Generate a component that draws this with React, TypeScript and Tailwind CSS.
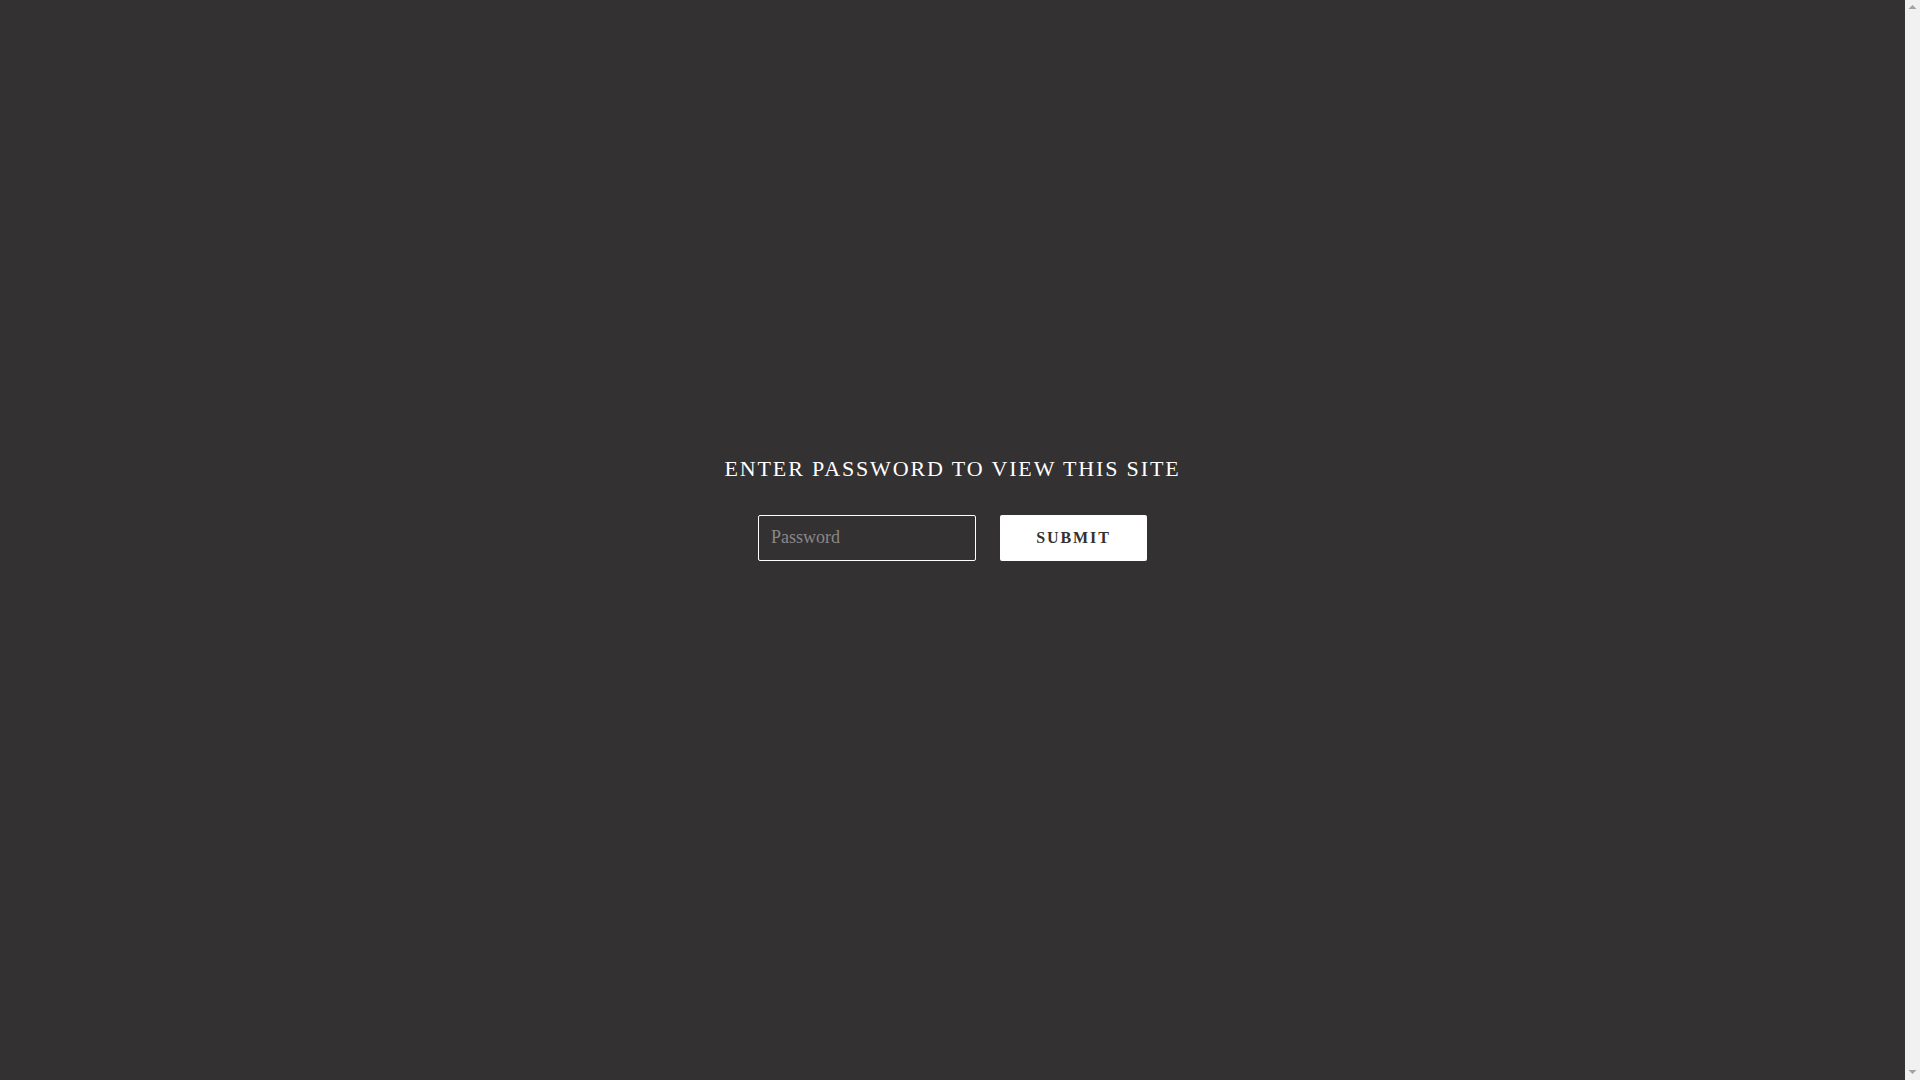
import React from 'react';

const Arrow: React.FC<{ down?: boolean }> = ({ down }) => (
  <svg width="15" height="15" viewBox="0 0 15 15" className="block">
    {down ? (
      <polygon points="3.5,5 11.5,5 7.5,9" fill="#a3a3a3" />
    ) : (
      <polygon points="7.5,5 11.5,9 3.5,9" fill="#a3a3a3" />
    )}
  </svg>
);

const App: React.FC = () => {
  return (
    <div
      className="flex h-screen w-full bg-[#333132] text-white"
      style={{ fontFamily: '"Liberation Serif", "Times New Roman", serif' }}
    >
      <div className="flex h-full flex-1 flex-col items-center justify-center pb-[64px]">
        <h2 className="text-[22px] leading-[1.3] tracking-[0.085em] uppercase">Enter password to view this site</h2>

        <form className="mt-[32px] flex items-center gap-[24px]" onSubmit={(e) => e.preventDefault()}>
          <input
            type="password"
            placeholder="Password"
            className="h-[46px] w-[218px] rounded-[2px] border border-white bg-transparent px-[12px] pb-[2px] text-[18px] text-white placeholder:text-[#8a8889] focus:outline-none"
          />
          <button
            type="submit"
            className="h-[46px] w-[147px] rounded-[2px] bg-white text-[16px] font-bold tracking-[0.12em] text-[#333132] uppercase"
          >
            Submit
          </button>
        </form>
      </div>

      {/* scrollbar track */}
      <div className="flex h-full w-[15px] shrink-0 flex-col justify-between bg-[#f1f1f1]">
        <Arrow />
        <Arrow down />
      </div>
    </div>
  );
};

export default App;
